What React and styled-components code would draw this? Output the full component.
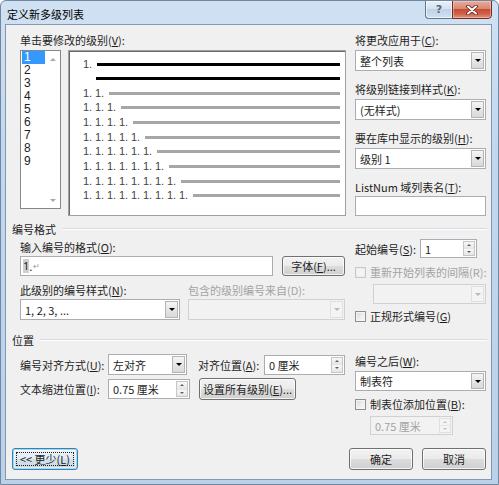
import React from "react";
import styled, { createGlobalStyle } from "styled-components";

const GlobalStyle = createGlobalStyle`
  html, body { margin: 0; padding: 0; background: #ffffff; }
  body {
    font-family: "Noto Sans CJK SC", "Noto Sans", sans-serif;
    font-size: 11px;
    color: #1e1e1e;
  }
  *, *::before, *::after { box-sizing: border-box; }
  u { text-decoration: underline; text-underline-offset: 1px; }
`;

const Window = styled.div`
  width: 499px;
  height: 485px;
  display: flex;
  flex-direction: column;
  background: linear-gradient(180deg, #d0e1f3 0%, #c3d8ee 30%, #bad1ea 100%);
  border: 1px solid #71879f;
  border-radius: 6px 6px 0 0;
  overflow: hidden;
`;

const TitleBar = styled.div`
  height: 23px;
  flex: none;
  display: flex;
  align-items: flex-start;
`;

const Title = styled.div`
  margin: 5px 0 0 6px;
  font-size: 11px;
  line-height: 16px;
  color: #000;
`;

const Captions = styled.div`
  margin: -1px 6px 0 auto;
  display: flex;
`;

const HelpBtn = styled.div`
  width: 27px;
  height: 19px;
  border: 1px solid #5f7894;
  border-right: none;
  border-radius: 0 0 0 4px;
  background: linear-gradient(180deg, #eaf1f9 0%, #d5e2f0 45%, #bfd2e7 50%, #d2e1f1 100%);
  box-shadow: inset 0 0 0 1px rgba(255, 255, 255, 0.6);
  display: flex;
  align-items: center;
  justify-content: center;
  color: #56687e;
  font: bold 11px "DejaVu Sans", sans-serif;
`;

const CloseBtn = styled.div`
  width: 40px;
  height: 19px;
  border: 1px solid #6e2c22;
  border-radius: 0 0 4px 0;
  background: linear-gradient(180deg, #e9ab9c 0%, #da8775 45%, #c54b34 50%, #cf6047 75%, #e39479 100%);
  box-shadow: inset 0 0 0 1px rgba(255, 220, 210, 0.45);
  display: flex;
  align-items: center;
  justify-content: center;
`;

const Client = styled.div`
  flex: 1;
  margin: 0 6px 4px 4px;
  border: 1px solid #8397b0;
  background: #f0f0f0;
  display: flex;
  flex-direction: column;
  padding: 0 4px 0 6px;
`;

const Section = styled.div`
  display: flex;
  align-items: flex-start;
  margin-top: ${(p) => p.$mt || 0}px;
`;

const Column = styled.div`
  display: flex;
  flex-direction: column;
  width: ${(p) => p.$w}px;
  margin-left: ${(p) => p.$ml || 0}px;
  flex: none;
`;

const Row = styled.div`
  display: flex;
  align-items: ${(p) => p.$align || "center"};
  gap: ${(p) => p.$gap || 0}px;
  margin-top: ${(p) => p.$mt || 0}px;
  margin-left: ${(p) => p.$ml || 0}px;
  height: ${(p) => (p.$h ? `${p.$h}px` : "auto")};
`;

const Label = styled.div`
  font-size: 11px;
  line-height: 14px;
  height: 14px;
  white-space: nowrap;
  color: ${(p) => (p.$disabled ? "#a3a3a3" : "#1e1e1e")};
  margin-top: ${(p) => p.$mt || 0}px;
  margin-left: ${(p) => p.$ml || 0}px;
  ${(p) => (p.$w ? `width: ${p.$w}px; flex: none;` : "")}
`;

const GroupHeader = styled.div`
  display: flex;
  align-items: center;
  height: 14px;
  margin-top: ${(p) => p.$mt}px;
  font-size: 11px;
  line-height: 14px;
  color: #1e1e1e;
  &::after {
    content: "";
    flex: 1;
    margin-left: 6px;
    height: 2px;
    border-top: 1px solid #d5dbe2;
    border-bottom: 1px solid #ffffff;
  }
`;

/* ---------- level list + preview ---------- */

const ListBox = styled.div`
  width: 41px;
  height: 159px;
  flex: none;
  border: 1px solid #828790;
  background: #fff;
  display: flex;
`;

const ListItems = styled.div`
  width: 24px;
  display: flex;
  flex-direction: column;
`;

const ListItem = styled.div`
  height: 13px;
  line-height: 13px;
  overflow: hidden;
  padding-left: 2px;
  margin-left: 1px;
  font-family: "Liberation Sans", sans-serif;
  font-size: 12px;
  background: ${(p) => (p.$selected ? "#3399ff" : "transparent")};
  color: ${(p) => (p.$selected ? "#fff" : "#1e1e1e")};
`;

const ScrollCol = styled.div`
  margin-left: auto;
  width: 15px;
  display: flex;
  flex-direction: column;
  justify-content: space-between;
`;

const ScrollArrow = styled.div`
  height: 16px;
  display: flex;
  align-items: center;
  justify-content: center;
  &::after {
    content: "";
    border-left: 3px solid transparent;
    border-right: 3px solid transparent;
    ${(p) =>
      p.$down ? "border-top: 3px solid #a8a8a8;" : "border-bottom: 3px solid #a8a8a8;"}
  }
`;

const Preview = styled.div`
  width: 278px;
  height: 166px;
  flex: none;
  background: #fff;
  border: 1px solid #a0a0a0;
  box-shadow: inset 1px 1px 0 #696969;
  padding: 5.7px 5px 0 14px;
  display: flex;
  flex-direction: column;
`;

const PreviewRow = styled.div`
  height: 14.67px;
  display: flex;
  align-items: center;
`;

const Num = styled.span`
  width: ${(p) => p.$n * 12 + 2}px;
  flex: none;
  display: flex;
  font-family: "Liberation Sans", sans-serif;
  font-size: 11px;
  line-height: 13px;
  color: #454545;
`;

const Seg = styled.span`
  width: 12px;
  flex: none;
`;

const Bar = styled.span`
  flex: 1;
  height: 3px;
  margin-left: ${(p) => p.$indent || 0}px;
  background: ${(p) => (p.$black ? "#000" : "#a6a6a6")};
`;

/* ---------- controls ---------- */

const Combo = styled.div`
  width: ${(p) => p.$w}px;
  height: ${(p) => p.$h || 21}px;
  flex: none;
  display: flex;
  padding: 1px;
  margin-top: ${(p) => p.$mt || 0}px;
  margin-left: ${(p) => p.$ml || 0}px;
  border: 1px solid ${(p) => (p.$disabled ? "#cfd1d4" : "#abadb3")};
  background: ${(p) => (p.$disabled ? "#f2f2f2" : "#fff")};
`;

const FieldText = styled.span`
  flex: 1;
  align-self: center;
  padding-left: 3px;
  font-size: 11px;
  line-height: 14px;
  white-space: nowrap;
  color: ${(p) => (p.$disabled ? "#a3a3a3" : "#1e1e1e")};
`;

const DropBtn = styled.span`
  width: 13px;
  flex: none;
  display: flex;
  align-items: center;
  justify-content: center;
  border: 1px solid ${(p) => (p.$disabled ? "#e0e0e0" : "#b5b5b5")};
  background: ${(p) =>
    p.$disabled ? "#f4f4f4" : "linear-gradient(180deg, #f5f5f5 0%, #e6e6e6 50%, #d9d9d9 100%)"};
  &::after {
    content: "";
    border-left: 3px solid transparent;
    border-right: 3px solid transparent;
    border-top: 3px solid ${(p) => (p.$disabled ? "#b8b8b8" : "#000")};
  }
`;

const SpinBox = styled(Combo)``;

const SpinArrows = styled.span`
  width: 12px;
  flex: none;
  display: flex;
  flex-direction: column;
  border: 1px solid ${(p) => (p.$disabled ? "#e0e0e0" : "#c6c6c6")};
`;

const SpinArrow = styled.span`
  flex: 1;
  display: flex;
  align-items: center;
  justify-content: center;
  background: ${(p) => (p.$disabled ? "#f4f4f4" : "linear-gradient(180deg, #f8f8f8, #e6e6e6)")};
  & + & {
    border-top: 1px solid ${(p) => (p.$disabled ? "#e6e6e6" : "#d0d0d0")};
  }
  &::after {
    content: "";
    border-left: 2px solid transparent;
    border-right: 2px solid transparent;
    ${(p) =>
      p.$down
        ? `border-top: 2px solid ${p.$disabled ? "#c0c0c0" : "#606060"};`
        : `border-bottom: 2px solid ${p.$disabled ? "#c0c0c0" : "#606060"};`}
  }
`;

const TextInput = styled.div`
  width: ${(p) => p.$w}px;
  height: ${(p) => p.$h || 20}px;
  flex: none;
  margin-top: ${(p) => p.$mt || 0}px;
  border: 1px solid #abadb3;
  background: #fff;
  display: flex;
  align-items: center;
  padding-left: 2px;
  font-size: 11px;
  line-height: 14px;
`;

const Highlight = styled.span`
  background: #cfcfcf;
  font-family: "Noto Sans", sans-serif;
`;

const Pilcrow = styled.span`
  color: #9a9a9a;
  font-size: 8px;
  margin-left: 1px;
`;

const Button = styled.div`
  width: ${(p) => p.$w}px;
  height: ${(p) => p.$h || 22}px;
  flex: none;
  margin-left: ${(p) => p.$ml || 0}px;
  border: 1px solid #707070;
  border-radius: 3px;
  background: linear-gradient(180deg, #f2f2f2 0%, #ebebeb 49%, #dddddd 50%, #cfcfcf 100%);
  box-shadow: inset 0 0 0 1px rgba(255, 255, 255, 0.75);
  display: flex;
  align-items: center;
  justify-content: center;
  font-size: 11px;
  line-height: 14px;
  color: #1e1e1e;
  white-space: nowrap;
`;

const FocusButton = styled(Button)`
  position: relative;
  border-color: #3c7fb1;
  background: linear-gradient(180deg, #eef4f8 0%, #e3ecf3 49%, #d4e1ea 50%, #c9d8e3 100%);
  box-shadow: inset 0 0 0 1px #9cdaf7, inset 0 0 0 2px rgba(255, 255, 255, 0.5);
  &::after {
    content: "";
    position: absolute;
    inset: 3px;
    border: 1px dotted #202020;
  }
`;

const CheckRow = styled.div`
  display: flex;
  align-items: center;
  gap: 4px;
  height: 14px;
  margin-top: ${(p) => p.$mt || 0}px;
`;

const CheckBox = styled.span`
  width: 11px;
  height: 11px;
  flex: none;
  border: 1px solid ${(p) => (p.$disabled ? "#c8c8c8" : "#8e8f8f")};
  background: ${(p) =>
    p.$disabled ? "#f4f4f4" : "linear-gradient(135deg, #d8d8d8 0%, #f0f0f0 60%, #fbfbfb 100%)"};
  box-shadow: inset 0 0 0 1px ${(p) => (p.$disabled ? "#ececec" : "#f4f4f4")};
`;

const Footer = styled.div`
  margin-top: auto;
  padding-bottom: 9px;
  display: flex;
  align-items: center;
`;

const Spinner = ({ w, h = 19, text, disabled, mt, ml }) => (
  <SpinBox $w={w} $h={h} $disabled={disabled} $mt={mt} $ml={ml}>
    <FieldText $disabled={disabled}>{text}</FieldText>
    <SpinArrows $disabled={disabled}>
      <SpinArrow $disabled={disabled} />
      <SpinArrow $disabled={disabled} $down />
    </SpinArrows>
  </SpinBox>
);

const Dropdown = ({ w, h = 21, text, disabled, mt, ml }) => (
  <Combo $w={w} $h={h} $disabled={disabled} $mt={mt} $ml={ml}>
    <FieldText $disabled={disabled}>{text}</FieldText>
    <DropBtn $disabled={disabled} />
  </Combo>
);

const levels = [2, 3, 4, 5, 6, 7, 8, 9];

export default function App() {
  return (
    <>
      <GlobalStyle />
      <Window>
        <TitleBar>
          <Title>定义新多级列表</Title>
          <Captions>
            <HelpBtn>?</HelpBtn>
            <CloseBtn>
              <svg width="12" height="10" viewBox="0 0 12 10">
                <path d="M2 1.5 L10 8.5 M10 1.5 L2 8.5" stroke="#5a1d14" strokeWidth="3.6" strokeLinecap="round" />
                <path d="M2 1.5 L10 8.5 M10 1.5 L2 8.5" stroke="#ffffff" strokeWidth="2" strokeLinecap="round" />
              </svg>
            </CloseBtn>
          </Captions>
        </TitleBar>

        <Client>
          {/* top: levels + preview | apply-to settings */}
          <Section $mt={8}>
            <Column $w={326} $ml={8}>
              <Label>
                单击要修改的级别(<u>V</u>):
              </Label>
              <Row $align="flex-start" $gap={7} $mt={3}>
                <ListBox>
                  <ListItems>
                    {[1, 2, 3, 4, 5, 6, 7, 8, 9].map((n) => (
                      <ListItem key={n} $selected={n === 1}>
                        {n}
                      </ListItem>
                    ))}
                  </ListItems>
                  <ScrollCol>
                    <ScrollArrow />
                    <ScrollArrow $down />
                  </ScrollCol>
                </ListBox>
                <Preview>
                  <PreviewRow>
                    <Num $n={1}>
                      <Seg>1.</Seg>
                    </Num>
                    <Bar $black />
                  </PreviewRow>
                  <PreviewRow>
                    <Bar $black $indent={13} />
                  </PreviewRow>
                  {levels.map((n) => (
                    <PreviewRow key={n}>
                      <Num $n={n}>
                        {Array.from({ length: n }).map((_, i) => (
                          <Seg key={i}>1.</Seg>
                        ))}
                      </Num>
                      <Bar />
                    </PreviewRow>
                  ))}
                </Preview>
              </Row>
            </Column>

            <Column $w={131} $ml={9}>
              <Label>
                将更改应用于(<u>C</u>):
              </Label>
              <Dropdown w={131} text="整个列表" mt={3} />
              <Label $mt={11}>
                将级别链接到样式(<u>K</u>):
              </Label>
              <Dropdown w={131} text="(无样式)" mt={3} />
              <Label $mt={11}>
                要在库中显示的级别(<u>H</u>):
              </Label>
              <Dropdown w={131} text="级别 1" mt={3} />
              <Label $mt={11}>
                ListNum 域列表名(<u>T</u>):
              </Label>
              <TextInput $w={131} $mt={2} />
            </Column>
          </Section>

          <GroupHeader $mt={6}>编号格式</GroupHeader>

          <Section $mt={3}>
            <Column $w={325} $ml={8}>
              <Label $mt={1}>
                输入编号的格式(<u>O</u>):
              </Label>
              <Row $mt={2} $gap={9}>
                <TextInput $w={253}>
                  <Highlight>1</Highlight>.<Pilcrow>↵</Pilcrow>
                </TextInput>
                <Button $w={63} $h={20}>
                  字体(<u>F</u>)...
                </Button>
              </Row>
              <Row $mt={7}>
                <Label $w={168}>
                  此级别的编号样式(<u>N</u>):
                </Label>
                <Label $disabled>包含的级别编号来自(D):</Label>
              </Row>
              <Row $mt={2} $gap={8}>
                <Dropdown w={160} text="1, 2, 3, ..." />
                <Dropdown w={157} disabled text="" />
              </Row>
            </Column>

            <Column $w={131} $ml={10}>
              <Row $h={19}>
                <Label $w={65}>
                  起始编号(<u>S</u>):
                </Label>
                <Spinner w={57} h={19} text="1" />
              </Row>
              <CheckRow $mt={7}>
                <CheckBox $disabled />
                <Label $disabled>重新开始列表的间隔(R):</Label>
              </CheckRow>
              <Dropdown w={113} h={20} disabled text="" mt={5} ml={18} />
              <CheckRow $mt={5}>
                <CheckBox />
                <Label>
                  正规形式编号(<u>G</u>)
                </Label>
              </CheckRow>
            </Column>
          </Section>

          <GroupHeader $mt={10}>位置</GroupHeader>

          <Section $mt={7}>
            <Column $w={325} $ml={8}>
              <Row $h={21}>
                <Label $w={88}>
                  编号对齐方式(<u>U</u>):
                </Label>
                <Dropdown w={79} text="左对齐" />
                <Label $w={66} $ml={11}>
                  对齐位置(<u>A</u>):
                </Label>
                <Spinner w={81} h={20} text="0 厘米" />
              </Row>
              <Row $h={22} $mt={3}>
                <Label $w={88}>
                  文本缩进位置(<u>I</u>):
                </Label>
                <Spinner w={82} h={20} text="0.75 厘米" />
                <Button $w={97} $ml={9}>
                  设置所有级别(<u>E</u>)...
                </Button>
              </Row>
            </Column>

            <Column $w={131} $ml={10}>
              <Label>
                编号之后(<u>W</u>):
              </Label>
              <Dropdown w={131} h={20} text="制表符" mt={3} />
              <CheckRow $mt={6}>
                <CheckBox />
                <Label>
                  制表位添加位置(<u>B</u>):
                </Label>
              </CheckRow>
              <Spinner w={83} h={19} disabled text="0.75 厘米" mt={5} ml={15} />
            </Column>
          </Section>

          <Footer>
            <FocusButton $w={66}>
              {"<<"} 更少(<u>L</u>)
            </FocusButton>
            <Button $w={64} $ml={271}>
              确定
            </Button>
            <Button $w={64} $ml={9}>
              取消
            </Button>
          </Footer>
        </Client>
      </Window>
    </>
  );
}
